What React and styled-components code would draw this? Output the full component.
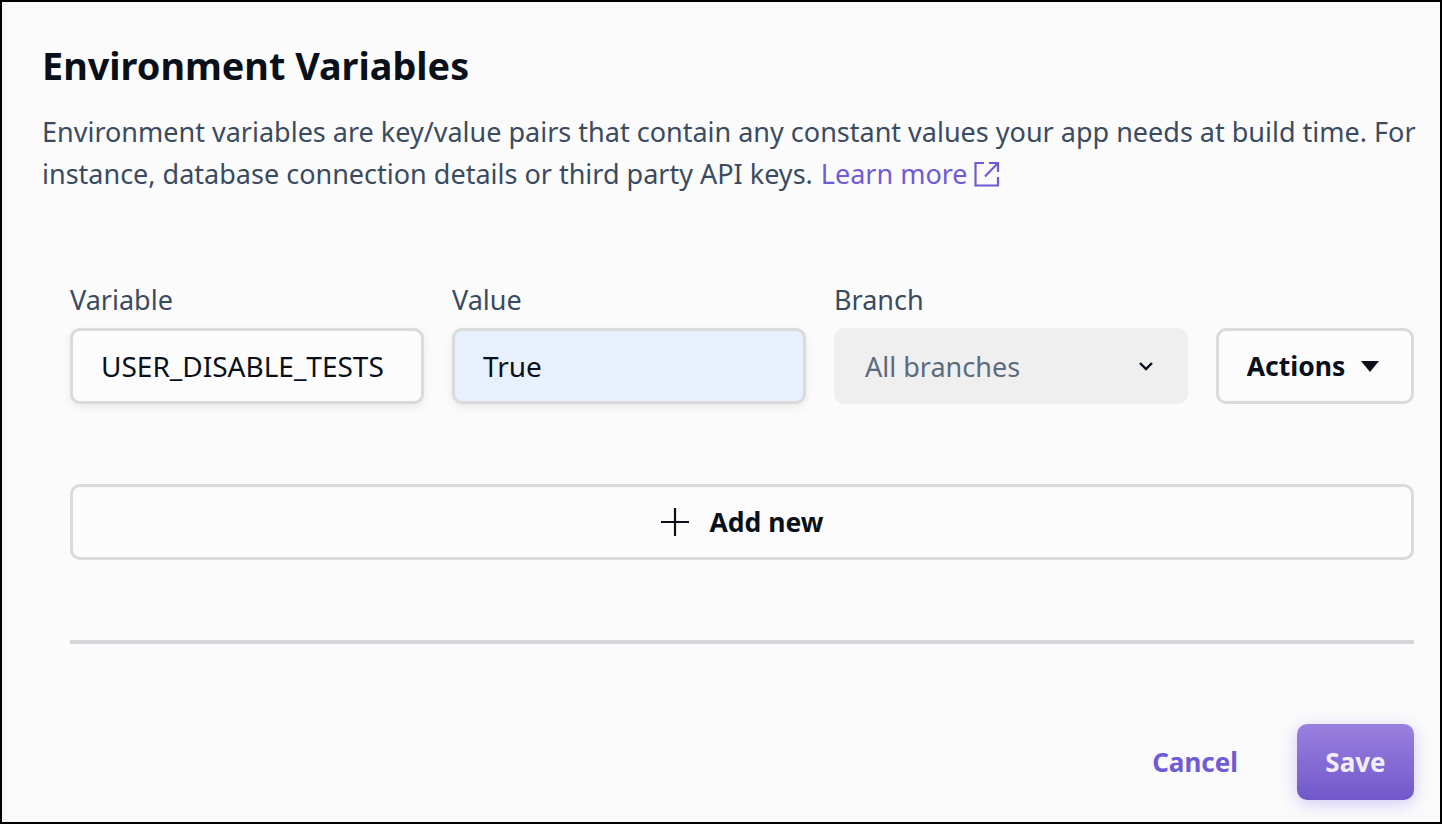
import * as React from "react"
import styled, { createGlobalStyle } from 'styled-components'

const GlobalStyle = createGlobalStyle`
  html, body {
    margin: 0;
    padding: 0;
    background: #fbfbfb;
  }
  * {
    box-sizing: border-box;
  }
`

const Frame = styled.div`
  width: 1442px;
  height: 824px;
  border: 2px solid #000;
  background: #fbfbfb;
  padding: 40px 26px 0 40px;
  font-family: "Noto Sans", "Open Sans", sans-serif;
  overflow: hidden;
  box-shadow: inset 14px 0 12px -12px rgba(0, 0, 0, 0.04);
`

const Title = styled.h1`
  margin: 0;
  font-size: 37.8px;
  line-height: 48px;
  font-weight: 700;
  color: #0a101a;
`

const Intro = styled.div`
  margin: 21px -6px 0 0;
  font-size: 27px;
  line-height: 42px;
  color: #3a4b60;
`

const IntroLine = styled.div`
  display: flex;
  align-items: center;
  white-space: nowrap;
`

const LearnMore = styled.a`
  color: #6f5bd6;
  margin-left: 8px;
`

const ExternalIcon = styled.svg`
  margin-left: 6px;
`

const Form = styled.div`
  margin: 0 0 0 28px;
  padding-top: 88px;
`

const Row = styled.div`
  display: grid;
  grid-template-columns: 354px 354px 354px 198px;
  column-gap: 28px;
  align-items: end;
`

const Field = styled.div`
  display: flex;
  flex-direction: column;
  gap: 11px;
`

const Label = styled.label`
  font-size: 27px;
  line-height: 34px;
  color: #3a4b60;
`

const Input = styled.div`
  height: 76px;
  padding: 0 28px;
  display: flex;
  align-items: center;
  font-size: 28px;
  color: #0a101a;
  background: ${p => (p.$filled ? '#e8f0fd' : '#fcfcfc')};
  border: 3px solid #dadada;
  border-radius: 10px;
  box-shadow: 0 3px 8px rgba(0, 0, 0, 0.08);
`

const Select = styled.div`
  height: 76px;
  padding: 0 34px 0 31px;
  display: flex;
  align-items: center;
  justify-content: space-between;
  font-size: 27px;
  color: #5b6b7e;
  background: #efefef;
  border-radius: 10px;
`

const OutlineButton = styled.button`
  height: 76px;
  display: flex;
  align-items: center;
  justify-content: center;
  font-family: inherit;
  font-size: 26.5px;
  font-weight: 700;
  color: #0a101a;
  background: #fcfcfc;
  border: 3px solid #dadada;
  border-radius: 10px;
  gap: ${p => p.$gap || 15}px;
  padding: 0 ${p => p.$nudge || 0}px 0 0;
`

const AddButton = styled(OutlineButton)`
  width: 100%;
  margin-top: 80px;
`

const Divider = styled.div`
  height: 4px;
  margin-top: 80px;
  background: #d6d6da;
`

const Footer = styled.div`
  display: flex;
  justify-content: flex-end;
  align-items: center;
  gap: 59px;
  margin-top: 80px;
`

const CancelLink = styled.a`
  font-size: 26px;
  font-weight: 700;
  color: #6f5bd6;
`

const SaveButton = styled.button`
  width: 117px;
  height: 76px;
  font-family: inherit;
  font-size: 26px;
  font-weight: 700;
  color: #f1eefc;
  border: 0;
  border-radius: 10px;
  background: linear-gradient(180deg, #9a80de 0%, #7058cb 100%);
  box-shadow: 0 4px 18px rgba(120, 90, 240, 0.3);
`

const App = () => {
  return (
    <Frame>
      <GlobalStyle />
      <Title>Environment Variables</Title>
      <Intro>
        <IntroLine>
          Environment variables are key/value pairs that contain any constant values your app needs at build time. For
        </IntroLine>
        <IntroLine>
          <span>instance, database connection details or third party API keys.</span>
          <LearnMore>Learn more</LearnMore>
          <ExternalIcon width="26" height="26" viewBox="0 0 26 26" fill="none" stroke="#6f5bd6" strokeWidth="2.2">
            <path d="M10 2H1.5v22.5h22.5V16" />
            <path d="M15 2h9v9M24 2 11 15.5" />
          </ExternalIcon>
        </IntroLine>
      </Intro>
      <Form>
        <Row>
          <Field>
            <Label>Variable</Label>
            <Input>USER_DISABLE_TESTS</Input>
          </Field>
          <Field>
            <Label>Value</Label>
            <Input $filled>True</Input>
          </Field>
          <Field>
            <Label>Branch</Label>
            <Select>
              All branches
              <svg width="16" height="10" viewBox="0 0 16 10" fill="none" stroke="#0a101a" strokeWidth="2.4">
                <path d="M2 2l6 6 6-6" />
              </svg>
            </Select>
          </Field>
          <OutlineButton $nudge={3}>
            Actions
            <svg width="20" height="11" viewBox="0 0 20 11">
              <path d="M1 0h18L10 11z" fill="#0a101a" />
            </svg>
          </OutlineButton>
        </Row>
        <AddButton $gap={21}>
          <svg width="28" height="28" viewBox="0 0 28 28" stroke="#0a101a" strokeWidth="2.2">
            <path d="M14 0v28M0 14h28" />
          </svg>
          Add new
        </AddButton>
        <Divider />
        <Footer>
          <CancelLink>Cancel</CancelLink>
          <SaveButton>Save</SaveButton>
        </Footer>
      </Form>
    </Frame>
  )
}

export default App
